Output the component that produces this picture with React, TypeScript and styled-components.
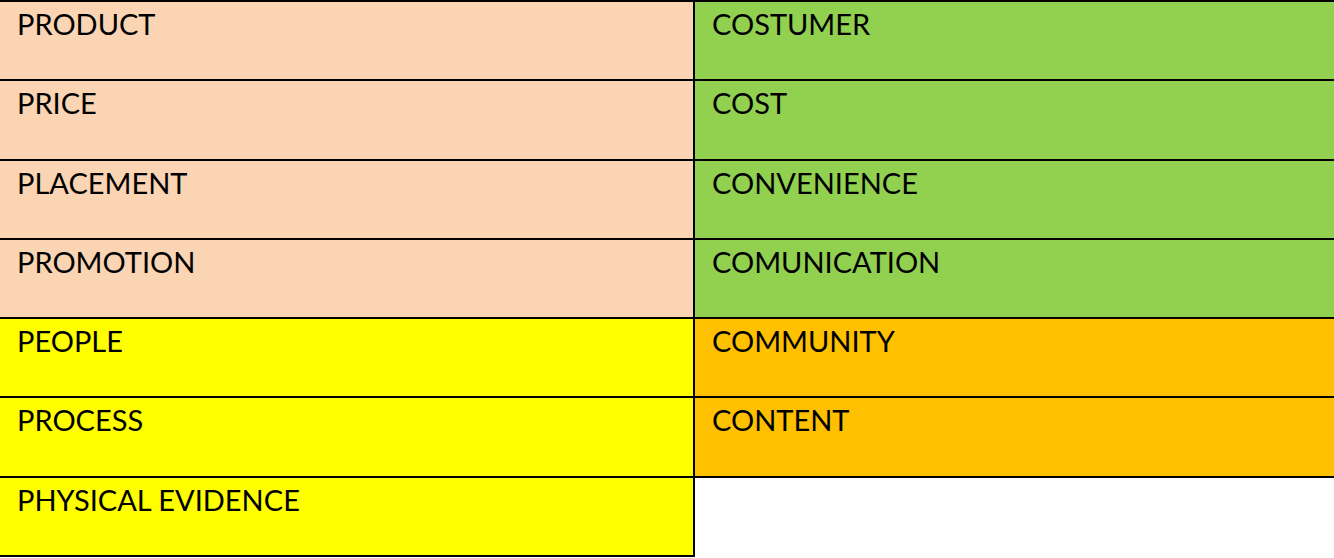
import React from "react";
import styled, { createGlobalStyle } from "styled-components";

const GlobalStyle = createGlobalStyle`
  html, body {
    margin: 0;
    padding: 0;
    background: #ffffff;
  }
  body {
    font-family: Lato, "Open Sans", sans-serif;
  }
`;

const Table = styled("div")`
  width: 1334px;
  display: grid;
  grid-template-columns: 695px 639px;
  grid-auto-rows: 79.3px;
  border-top: 2px solid #000;
  box-sizing: border-box;
`;

const Cell = styled("div")<{ background: string; side: "left" | "right" }>`
  box-sizing: border-box;
  background: ${props => props.background};
  border-bottom: 2px solid #000;
  border-right: ${props => (props.side === "left" ? "2px solid #000" : "none")};
  padding: 5px 0 0 17px;
  font-size: 29px;
  line-height: 1.2;
  color: #000;
  text-transform: uppercase;
`;

const EmptyCell = styled("div")`
  background: #ffffff;
`;

const PEACH = "#fbd4b4";
const GREEN = "#92d050";
const YELLOW = "#ffff00";
const ORANGE = "#ffc000";

type Row = {
  left: { label: string; color: string };
  right?: { label: string; color: string };
};

const rows: Row[] = [
  { left: { label: "PRODUCT", color: PEACH }, right: { label: "COSTUMER", color: GREEN } },
  { left: { label: "PRICE", color: PEACH }, right: { label: "COST", color: GREEN } },
  { left: { label: "PLACEMENT", color: PEACH }, right: { label: "CONVENIENCE", color: GREEN } },
  { left: { label: "PROMOTION", color: PEACH }, right: { label: "COMUNICATION", color: GREEN } },
  { left: { label: "PEOPLE", color: YELLOW }, right: { label: "COMMUNITY", color: ORANGE } },
  { left: { label: "PROCESS", color: YELLOW }, right: { label: "CONTENT", color: ORANGE } },
  { left: { label: "PHYSICAL EVIDENCE", color: YELLOW } },
];

const App: React.FC = () => {
  return (
    <>
      <GlobalStyle />
      <Table>
        {rows.map(row => (
          <React.Fragment key={row.left.label}>
            <Cell background={row.left.color} side="left">
              {row.left.label}
            </Cell>
            {row.right ? (
              <Cell background={row.right.color} side="right">
                {row.right.label}
              </Cell>
            ) : (
              <EmptyCell />
            )}
          </React.Fragment>
        ))}
      </Table>
    </>
  );
};

export default App;
